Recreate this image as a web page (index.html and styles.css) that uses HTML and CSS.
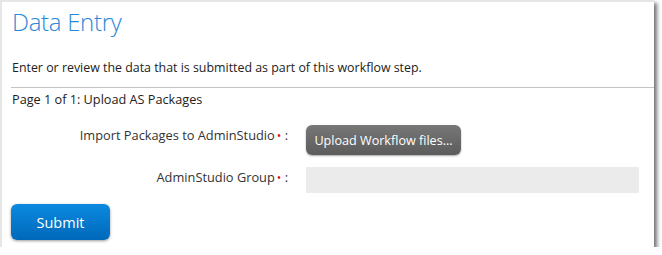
FILE: index.html
```html
<!DOCTYPE html>
<html lang="en">
  <head>
    <meta charset="UTF-8" />
    <title>Data Entry</title>
    <link rel="stylesheet" href="styles.css">
  </head>
  <body>
    <div class="window">
      <h1 class="title">Data Entry</h1>
      <p class="intro">Enter or review the data that is submitted as part of this workflow step.</p>
      <div class="page-name">Page 1 of 1: Upload AS Packages</div>
      <form class="entry-form">
        <div class="form-row">
          <label>Import Packages to AdminStudio<span class="req">&bull;</span> :</label>
          <button type="button" class="upload-btn">Upload Workflow files...</button>
        </div>
        <div class="form-row">
          <label>AdminStudio Group<span class="req">&bull;</span> :</label>
          <div class="field-box"></div>
        </div>
        <button type="submit" class="submit-btn">Submit</button>
      </form>
    </div>
  </body>
</html>
```

FILE: styles.css
```css
* {
  margin: 0;
  padding: 0;
  box-sizing: border-box;
}

body {
  background: #fff;
  font-family: "Open Sans", "Noto Sans", sans-serif;
  color: #222;
}

.window {
  width: 654px;
  height: 247px;
  margin: 0;
  border-top: 2px solid #e6e6e6;
  border-left: 2px solid #e6e6e6;
  background: #fff;
  box-shadow: 3px 3px 4px rgba(0, 0, 0, 0.55);
  padding-top: 5px;
}

.title {
  font-size: 24px;
  font-weight: 300;
  line-height: 30px;
  letter-spacing: -0.3px;
  color: #2b88d8;
  padding-left: 10px;
}

.intro {
  font-size: 12.4px;
  line-height: 18px;
  margin-top: 22px;
  padding-left: 10px;
}

.page-name {
  font-size: 12.7px;
  line-height: 18px;
  margin-left: 9px;
  padding-left: 1px;
  padding-top: 2px;
  border-top: 1px solid #c4c4c4;
  margin-top: 10px;
}

.entry-form {
  padding-left: 9px;
}

.form-row {
  display: grid;
  grid-template-columns: 277px 1fr;
  column-gap: 18px;
  align-items: start;
}

.form-row:first-child {
  margin-top: 17px;
}

.form-row + .form-row {
  margin-top: 12px;
}

.form-row label {
  text-align: right;
  font-size: 12.8px;
  line-height: 18px;
  padding-top: 1px;
  color: #333;
}

.req {
  color: #e8121b;
  font-size: 12px;
  margin-left: 2px;
}

.upload-btn {
  justify-self: start;
  width: 155px;
  height: 30px;
  border: none;
  border-radius: 6px;
  background: linear-gradient(#777, #5c5c5c);
  color: #fff;
  font-family: inherit;
  font-size: 12.6px;
  box-shadow: 0 1px 2px rgba(0, 0, 0, 0.35);
}

.field-box {
  width: 333px;
  height: 26px;
  background: #ebebeb;
}

.submit-btn {
  margin-top: 11px;
  width: 99px;
  height: 36px;
  border: none;
  border-radius: 6px;
  background: linear-gradient(#0b8ae0, #0068b9);
  color: #fff;
  font-family: inherit;
  font-size: 14.5px;
  box-shadow: 0 1px 3px rgba(0, 0, 0, 0.4);
}
```
